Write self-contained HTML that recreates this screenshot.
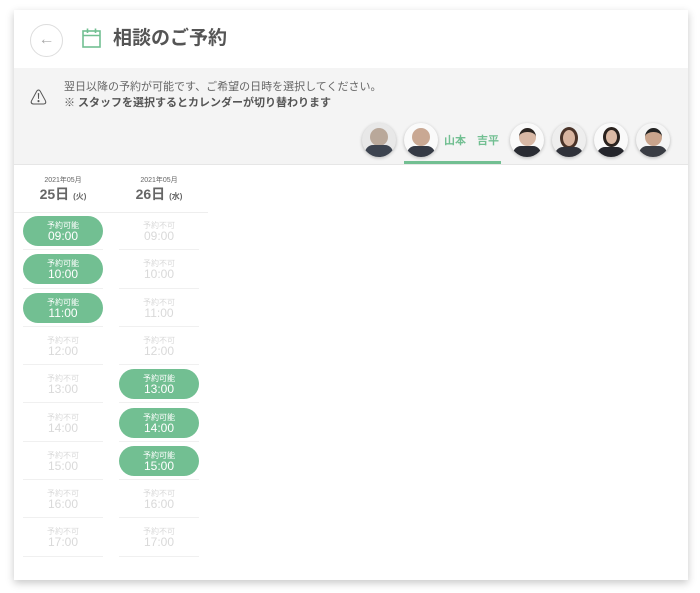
<!DOCTYPE html>
<html><head><meta charset="utf-8"><style>
*{margin:0;padding:0;box-sizing:border-box}
body{width:700px;height:593px;background:#fff;font-family:"Liberation Sans","Noto Sans CJK JP",sans-serif;position:relative;overflow:hidden}
.card{position:absolute;left:14px;top:10px;width:674px;height:570px;background:#fff;box-shadow:0 3px 8px rgba(0,0,0,.22)}
.a{position:absolute}
.band{left:0;top:58px;width:674px;height:97px;background:#f4f4f4;border-bottom:1px solid #e6e6e6}
.av{position:absolute;width:34px;height:34px;border-radius:50%;background:#f2f2f2;box-shadow:0 1px 3px rgba(0,0,0,.25);overflow:hidden}
.slot{position:absolute;width:80px;height:38.3px;border-bottom:1px solid #f0f0f0;text-align:center}
.b{position:absolute;left:0;top:4px;width:80px;height:30px;border-radius:15px;background:#72bf92;color:#fff}
.n{position:absolute;left:0;top:4px;width:80px;height:30px;color:#d9d9d9}
.s{font-size:8px;line-height:9px;margin-top:5px}
.t{font-size:12px;line-height:13px}
</style></head><body>
<div class="card">
 <div class="a" style="left:16px;top:14px;width:33px;height:33px;border:1px solid #ddd;border-radius:50%;color:#aaa;font-size:16px;text-align:center;line-height:30px">←</div>
 <svg class="a" style="left:67px;top:17px" width="22" height="22" viewBox="0 0 22 22"><rect x="2" y="4" width="17" height="16" fill="none" stroke="#72bf92" stroke-width="1.6"/><line x1="2" y1="8.5" x2="19" y2="8.5" stroke="#72bf92" stroke-width="1.6"/><line x1="6.5" y1="1.5" x2="6.5" y2="6" stroke="#72bf92" stroke-width="1.6"/><line x1="14.5" y1="1.5" x2="14.5" y2="6" stroke="#72bf92" stroke-width="1.6"/></svg>
 <div class="a" style="left:99px;top:17px;font-size:19px;font-weight:bold;color:#555;line-height:24px">相談のご予約</div>
 <div class="a band"></div>
 <div class="a" style="left:16px;top:74px;font-size:17px;color:#555">⚠</div>
 <div class="a" style="left:50px;top:69px;font-size:11px;color:#666;line-height:16px">翌日以降の予約が可能です、ご希望の日時を選択してください。<br><b style="color:#555">※ スタッフを選択するとカレンダーが切り替わります</b></div>
 <div class="av" style="left:348px;top:113px;background:#e8e8e8"><div style="position:absolute;left:8px;top:5px;width:18px;height:18px;border-radius:50%;background:#b9a89a"></div><div style="position:absolute;left:3px;top:22px;width:28px;height:14px;border-radius:8px 8px 0 0;background:#3d4450"></div></div>
 <div class="av" style="left:390px;top:113px;background:#fafafa"><div style="position:absolute;left:8px;top:5px;width:18px;height:18px;border-radius:50%;background:#c9a893"></div><div style="position:absolute;left:3px;top:23px;width:28px;height:14px;border-radius:8px 8px 0 0;background:#353a45"></div></div>
 <div class="a" style="left:430px;top:122px;font-size:11px;font-weight:bold;color:#72bf92">山本　吉平</div>
 <div class="a" style="left:390px;top:151px;width:97px;height:3px;background:#72bf92"></div>
 <div class="av" style="left:496px;top:113px;background:#fafafa"><div style="position:absolute;left:9px;top:5px;width:17px;height:18px;border-radius:50%;background:#d8b8a5;border-top:4px solid #2b2522"></div><div style="position:absolute;left:3px;top:23px;width:28px;height:14px;border-radius:8px 8px 0 0;background:#2a2c33"></div></div>
 <div class="av" style="left:538px;top:113px;background:#eee"><div style="position:absolute;left:8px;top:4px;width:18px;height:22px;border-radius:50%;background:#d9b5a0;border:3px solid #4a3328"></div><div style="position:absolute;left:3px;top:24px;width:28px;height:12px;border-radius:8px 8px 0 0;background:#30323a"></div></div>
 <div class="av" style="left:580px;top:113px;background:#fafafa"><div style="position:absolute;left:9px;top:4px;width:17px;height:20px;border-radius:50%;background:#dcbaa5;border:3px solid #2a221e"></div><div style="position:absolute;left:3px;top:24px;width:28px;height:12px;border-radius:8px 8px 0 0;background:#25262c"></div></div>
 <div class="av" style="left:622px;top:113px;background:#f5f5f5"><div style="position:absolute;left:9px;top:5px;width:17px;height:18px;border-radius:50%;background:#c9a48c;border-top:4px solid #222"></div><div style="position:absolute;left:3px;top:23px;width:28px;height:14px;border-radius:8px 8px 0 0;background:#3a3d44"></div></div>

 <div class="a" style="left:9px;top:166px;width:80px;text-align:center;color:#666"><div style="font-size:7px;line-height:9px">2021年05月</div><div style="font-size:14px;font-weight:bold;line-height:18px">25日 <span style="font-size:8px">(火)</span></div></div>
 <div class="a" style="left:105px;top:166px;width:80px;text-align:center;color:#666"><div style="font-size:7px;line-height:9px">2021年05月</div><div style="font-size:14px;font-weight:bold;line-height:18px">26日 <span style="font-size:8px">(水)</span></div></div>
 <div class="a" style="left:0;top:202px;width:194px;height:1px;background:#eee"></div>
 <div id="c1"></div>
</div>
<div id="slots" style="position:absolute;left:0;top:0"></div>
<div style="position:absolute;left:0;top:0">
<!-- col1 -->
<div class="slot" style="left:23px;top:212px"><div class="b"><div class="s">予約可能</div><div class="t">09:00</div></div></div>
<div class="slot" style="left:23px;top:250.3px"><div class="b"><div class="s">予約可能</div><div class="t">10:00</div></div></div>
<div class="slot" style="left:23px;top:288.6px"><div class="b"><div class="s">予約可能</div><div class="t">11:00</div></div></div>
<div class="slot" style="left:23px;top:326.9px"><div class="n"><div class="s">予約不可</div><div class="t">12:00</div></div></div>
<div class="slot" style="left:23px;top:365.2px"><div class="n"><div class="s">予約不可</div><div class="t">13:00</div></div></div>
<div class="slot" style="left:23px;top:403.5px"><div class="n"><div class="s">予約不可</div><div class="t">14:00</div></div></div>
<div class="slot" style="left:23px;top:441.8px"><div class="n"><div class="s">予約不可</div><div class="t">15:00</div></div></div>
<div class="slot" style="left:23px;top:480.1px"><div class="n"><div class="s">予約不可</div><div class="t">16:00</div></div></div>
<div class="slot" style="left:23px;top:518.4px"><div class="n"><div class="s">予約不可</div><div class="t">17:00</div></div></div>
<!-- col2 -->
<div class="slot" style="left:119px;top:212px"><div class="n"><div class="s">予約不可</div><div class="t">09:00</div></div></div>
<div class="slot" style="left:119px;top:250.3px"><div class="n"><div class="s">予約不可</div><div class="t">10:00</div></div></div>
<div class="slot" style="left:119px;top:288.6px"><div class="n"><div class="s">予約不可</div><div class="t">11:00</div></div></div>
<div class="slot" style="left:119px;top:326.9px"><div class="n"><div class="s">予約不可</div><div class="t">12:00</div></div></div>
<div class="slot" style="left:119px;top:365.2px"><div class="b"><div class="s">予約可能</div><div class="t">13:00</div></div></div>
<div class="slot" style="left:119px;top:403.5px"><div class="b"><div class="s">予約可能</div><div class="t">14:00</div></div></div>
<div class="slot" style="left:119px;top:441.8px"><div class="b"><div class="s">予約可能</div><div class="t">15:00</div></div></div>
<div class="slot" style="left:119px;top:480.1px"><div class="n"><div class="s">予約不可</div><div class="t">16:00</div></div></div>
<div class="slot" style="left:119px;top:518.4px"><div class="n"><div class="s">予約不可</div><div class="t">17:00</div></div></div>
</div>
</body></html>
